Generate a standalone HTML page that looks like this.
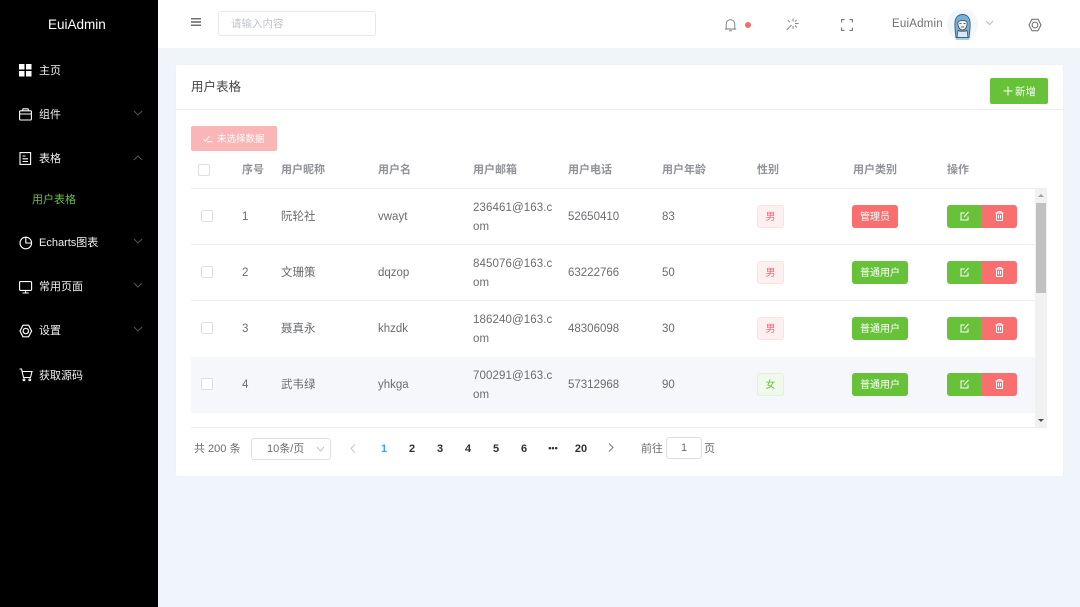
<!DOCTYPE html>
<html lang="zh">
<head>
<meta charset="utf-8">
<title>EuiAdmin</title>
<style>
*{box-sizing:border-box}
html,body{margin:0;padding:0}
body{width:1080px;height:607px;overflow:hidden;position:relative;background:#f0f4fb;font-family:"Liberation Sans","Noto Sans CJK SC",sans-serif;color:#606266}
#wrap{position:absolute;left:0;top:0;width:1080px;height:607px;overflow:hidden;background:#f0f4fb;filter:blur(.35px)}
.a{position:absolute;white-space:nowrap}
svg{display:block;position:absolute;fill:none;stroke:currentColor}
#side{left:0;top:0;width:158px;height:607px;background:#000;color:#fff}
.mi{position:absolute;left:39px;font-size:11px;line-height:14px;color:#f0f0f0}
#head{left:158px;top:0;width:922px;height:48px;background:#fff}
#card{left:175px;top:64px;width:889px;height:413px;background:#fff;border:1px solid #f0f2f7;border-radius:3px}
.th{position:absolute;top:163px;font-size:11px;line-height:14px;color:#909399;font-weight:700}
.line{position:absolute;left:191px;height:1px;background:#ebeef5}
.cb{position:absolute;width:12px;height:12px;border:1px solid #dcdfe6;border-radius:2px;background:#fff}
.td{position:absolute;font-size:11.5px;line-height:19px;color:#6a6c70;white-space:nowrap}
.tag{position:absolute;left:757px;width:27px;height:23px;border-radius:3px;font-size:10px;line-height:23px;text-align:center}
.m{background:#fef0f0;border:1px solid #fde2e2;color:#f56c6c}
.f{background:#f0f9eb;border:1px solid #e1f3d8;color:#67c23a}
.ty{position:absolute;left:852px;height:23px;border-radius:3px;font-size:10px;line-height:25px;text-align:center;color:#fff}
.ed{position:absolute;left:947px;width:35px;height:23px;background:#67c23a;border-radius:3px 0 0 3px;color:#fff}
.de{position:absolute;left:982px;width:35px;height:23px;background:#f96f6f;border-radius:0 3px 3px 0;color:#fff}
.pg{position:absolute;top:442px;width:20px;text-align:center;font-size:11px;line-height:14px;font-weight:700;color:#303133}
</style>
</head>
<body>
<div id="wrap">
<div class="a" id="side">
  <div class="a" style="left:48px;top:16px;font-size:13.5px;line-height:18px;color:#fff">EuiAdmin</div>

  <svg style="left:19px;top:64px" width="13" height="13" viewBox="0 0 13 13"><g fill="#fff" stroke="none"><rect width="5.500" height="5.500"/><rect x="7" width="5.500" height="5.500"/><rect y="7" width="5.500" height="5.500"/><rect x="7" y="7" width="5.500" height="5.500"/></g></svg>
  <div class="mi" style="top:64px">主页</div>

  <svg style="left:19px;top:108px" width="13" height="13" viewBox="0 0 13 13" stroke-width="1.100"><rect x=".6" y="2.800" width="11.800" height="9.200" rx="1"/><path d="M.6 6h11.800M3.500 2.800 4 .8h5l.5 2"/></svg>
  <div class="mi" style="top:108px">组件</div>
  <svg style="left:133px;top:110px;color:#555" width="10" height="6" viewBox="0 0 10 6"><path d="M1 1l4 4 4-4"/></svg>

  <svg style="left:19px;top:152px" width="13" height="13" viewBox="0 0 13 13" stroke-width="1.100"><rect x="1" y=".6" width="10.600" height="11.800"/><path d="M3.500 4h3M3.500 6.800h5.500M3.500 9.500h5.500"/></svg>
  <div class="mi" style="top:152px">表格</div>
  <svg style="left:133px;top:155px;color:#555" width="10" height="6" viewBox="0 0 10 6"><path d="M1 5l4-4 4 4"/></svg>

  <div class="mi" style="left:32px;top:193px;color:#67c23a">用户表格</div>

  <svg style="left:19px;top:236px" width="14" height="14" viewBox="0 0 14 14" stroke-width="1.100"><circle cx="6.800" cy="7" r="5.800"/><path d="M6.800 1.200V7h5.800"/></svg>
  <div class="mi" style="top:236px">Echarts图表</div>
  <svg style="left:133px;top:238px;color:#555" width="10" height="6" viewBox="0 0 10 6"><path d="M1 1l4 4 4-4"/></svg>

  <svg style="left:19px;top:281px" width="14" height="13" viewBox="0 0 14 13" stroke-width="1.100"><rect x=".6" y=".6" width="12" height="8.800" rx="1"/><path d="M6.600 9.500v2.200M3.500 12h6.200"/></svg>
  <div class="mi" style="top:280px">常用页面</div>
  <svg style="left:133px;top:282px;color:#555" width="10" height="6" viewBox="0 0 10 6"><path d="M1 1l4 4 4-4"/></svg>

  <svg style="left:19px;top:324px" width="14" height="14" viewBox="0 0 14 14" stroke-width="1.200"><path d="M4 1.200h5.600l3 5.800-3 5.800H4L1 7z"/><circle cx="6.800" cy="7" r="2.700"/></svg>
  <div class="mi" style="top:324px">设置</div>
  <svg style="left:133px;top:326px;color:#555" width="10" height="6" viewBox="0 0 10 6"><path d="M1 1l4 4 4-4"/></svg>

  <svg style="left:19px;top:368px" width="14" height="14" viewBox="0 0 14 14" stroke-width="1.100"><path d="M.5 1h2l2 8.500h7L13 3.500H3.300"/><circle cx="5" cy="11.800" r=".9"/><circle cx="10.800" cy="11.800" r=".9"/></svg>
  <div class="mi" style="top:369px">获取源码</div>
</div>

<div class="a" id="head"></div>
<svg style="left:191px;top:18px;color:#444" width="10" height="8" viewBox="0 0 10 8" stroke-width="1.200"><path d="M0 .8h10M0 4h10M0 7.200h10"/></svg>
<div class="a" style="left:218px;top:11px;width:158px;height:25px;border:1px solid #e4e7ed;border-radius:3px;background:#fff"></div>
<div class="a" style="left:231px;top:17px;font-size:10.500px;line-height:14px;color:#c0c4cc">请输入内容</div>

<svg style="left:724px;top:18px;color:#777" width="13" height="14" viewBox="0 0 13 14" stroke-width=".9"><path d="M.8 11h11.400M2.200 11V6a4.300 4.300 0 0 1 8.600 0v5M5 12.800h3"/></svg>
<div class="a" style="left:745px;top:22px;width:6px;height:6px;border-radius:50%;background:#f56c6c"></div>
<svg style="left:786px;top:18px;color:#888" width="13" height="13" viewBox="0 0 13 13" stroke-width="1"><path d="M7 .5v3M7 8v3M9 5.500h3.500M1.800 2.200l2 2M10.500 2l-1.600 1.600M9 7.500l2 2M5.500 7L.8 12"/></svg>
<svg style="left:841px;top:19px;color:#777" width="12" height="12" viewBox="0 0 12 12" stroke-width="1.100"><path d="M.6 3.500V.6h2.900M8.500.6h2.900v2.900M11.400 8.500v2.900H8.500M3.500 11.400H.6V8.500"/></svg>
<div class="a" style="left:892px;top:16px;font-size:11.500px;line-height:17px;letter-spacing:.2px;color:#707070">EuiAdmin</div>
<div class="a" style="left:947px;top:9px;width:31px;height:31px;border-radius:50%;background:#f2f7fd"></div>
<svg style="left:952px;top:12px" width="21" height="29" viewBox="0 0 21 29"><path d="M4 26c-1-8-1.500-12-1-16C3.500 5 6.500 2.500 10.500 2.500S17.500 5 18 10c.5 4 0 8-1 16z" fill="#6fb1e0" stroke="#4a5a6a" stroke-width=".9"/><path d="M6 10c2-2 7-2 9 0 .5 4-1.500 8-4.500 8S5.500 14 6 10z" fill="#f4f4f2" stroke="#444" stroke-width=".8"/><path d="M6 18.500c2 1 7 1 9 0l1 7H5z" fill="#dce9f4" stroke="#444" stroke-width=".7"/><path d="M7.500 11.500h2M11.500 11.500h2M9 15h3" stroke="#333" stroke-width=".8"/><path d="M4 26h13v2H4z" fill="#9fd0f0" stroke="none"/></svg>
<svg style="left:985px;top:20px;color:#bbb" width="9" height="6" viewBox="0 0 9 6"><path d="M1 1l3.500 3.500L8 1"/></svg>
<svg style="left:1028px;top:18px;color:#666" width="14" height="14" viewBox="0 0 14 14" stroke-width="1"><path d="M4 1.200h6l3 5.800-3 5.800H4L1 7z" stroke-linejoin="round"/><circle cx="7" cy="7" r="2.900"/></svg>

<div class="a" id="card"></div>
<div class="a" style="left:191px;top:79px;font-size:12.500px;line-height:17px;color:#444">用户表格</div>
<div class="a" style="left:175px;top:109px;width:889px;height:1px;background:#ebeef5"></div>
<div class="a" style="left:990px;top:78px;width:58px;height:26px;background:#67c23a;border-radius:2px;color:#fff;font-size:10.500px;line-height:29px;padding-left:25px">新增</div>
<svg style="left:1003px;top:86px;color:#fff" width="10" height="10" viewBox="0 0 10 10"><path d="M5 .5v9M.5 5h9"/></svg>

<div class="a" style="left:191px;top:126px;width:86px;height:25px;background:#fab6b6;border-radius:2px;color:#fff;font-size:9.500px;line-height:27px;padding-left:26px">未选择数据</div>
<svg style="left:203px;top:134px;color:#fff" width="10" height="9" viewBox="0 0 10 9"><path d="M.5 5l2 2 4-5M4 7.800h5.500"/></svg>

<div class="cb" style="left:198px;top:164px"></div>
<div class="th" style="left:242px">序号</div>
<div class="th" style="left:281px">用户昵称</div>
<div class="th" style="left:378px">用户名</div>
<div class="th" style="left:473px">用户邮箱</div>
<div class="th" style="left:568px">用户电话</div>
<div class="th" style="left:662px">用户年龄</div>
<div class="th" style="left:757px">性别</div>
<div class="th" style="left:853px">用户类别</div>
<div class="th" style="left:947px">操作</div>
<div class="line" style="top:188px;width:856px"></div>

<!-- row 1 -->
<div class="line" style="top:244px;width:844px"></div>
<div class="cb" style="left:201px;top:210px"></div>
<div class="td" style="left:242px;top:208px">1</div>
<div class="td" style="left:281px;top:208px">阮轮社</div>
<div class="td" style="left:378px;top:208px">vwayt</div>
<div class="td" style="left:473px;top:199px;letter-spacing:.1px">236461@163.c<br>om</div>
<div class="td" style="left:568px;top:208px">52650410</div>
<div class="td" style="left:662px;top:208px">83</div>
<div class="tag m" style="top:205px">男</div>
<div class="ty" style="top:205px;width:46px;background:#f96f6f">管理员</div>
<div class="ed" style="top:205px"><svg style="left:13px;top:6px" width="10" height="10" viewBox="0 0 10 10"><path d="M8 5.500V9H1V2h3.500M4 6l4.500-5"/></svg></div>
<div class="de" style="top:205px"><svg style="left:13px;top:6px" width="9" height="10" viewBox="0 0 9 10"><path d="M.5 2h8M3 2V.6h3V2M1.500 2v7.500h6V2M3.500 4v3.500M5.500 4v3.500"/></svg></div>

<!-- row 2 -->
<div class="line" style="top:300px;width:844px"></div>
<div class="cb" style="left:201px;top:266px"></div>
<div class="td" style="left:242px;top:264px">2</div>
<div class="td" style="left:281px;top:264px">文珊策</div>
<div class="td" style="left:378px;top:264px">dqzop</div>
<div class="td" style="left:473px;top:255px;letter-spacing:.1px">845076@163.c<br>om</div>
<div class="td" style="left:568px;top:264px">63222766</div>
<div class="td" style="left:662px;top:264px">50</div>
<div class="tag m" style="top:261px">男</div>
<div class="ty" style="top:261px;width:56px;background:#67c23a">普通用户</div>
<div class="ed" style="top:261px"><svg style="left:13px;top:6px" width="10" height="10" viewBox="0 0 10 10"><path d="M8 5.500V9H1V2h3.500M4 6l4.500-5"/></svg></div>
<div class="de" style="top:261px"><svg style="left:13px;top:6px" width="9" height="10" viewBox="0 0 9 10"><path d="M.5 2h8M3 2V.6h3V2M1.500 2v7.500h6V2M3.500 4v3.500M5.500 4v3.500"/></svg></div>

<!-- row 3 -->
<div class="cb" style="left:201px;top:322px"></div>
<div class="td" style="left:242px;top:320px">3</div>
<div class="td" style="left:281px;top:320px">聂真永</div>
<div class="td" style="left:378px;top:320px">khzdk</div>
<div class="td" style="left:473px;top:311px;letter-spacing:.1px">186240@163.c<br>om</div>
<div class="td" style="left:568px;top:320px">48306098</div>
<div class="td" style="left:662px;top:320px">30</div>
<div class="tag m" style="top:317px">男</div>
<div class="ty" style="top:317px;width:56px;background:#67c23a">普通用户</div>
<div class="ed" style="top:317px"><svg style="left:13px;top:6px" width="10" height="10" viewBox="0 0 10 10"><path d="M8 5.500V9H1V2h3.500M4 6l4.500-5"/></svg></div>
<div class="de" style="top:317px"><svg style="left:13px;top:6px" width="9" height="10" viewBox="0 0 9 10"><path d="M.5 2h8M3 2V.6h3V2M1.500 2v7.500h6V2M3.500 4v3.500M5.500 4v3.500"/></svg></div>

<!-- row 4 -->
<div class="a" style="left:191px;top:357px;width:844px;height:56px;background:#f5f7fa"></div>
<div class="cb" style="left:201px;top:378px"></div>
<div class="td" style="left:242px;top:376px">4</div>
<div class="td" style="left:281px;top:376px">武韦绿</div>
<div class="td" style="left:378px;top:376px">yhkga</div>
<div class="td" style="left:473px;top:367px;letter-spacing:.1px">700291@163.c<br>om</div>
<div class="td" style="left:568px;top:376px">57312968</div>
<div class="td" style="left:662px;top:376px">90</div>
<div class="tag f" style="top:373px">女</div>
<div class="ty" style="top:373px;width:56px;background:#67c23a">普通用户</div>
<div class="ed" style="top:373px"><svg style="left:13px;top:6px" width="10" height="10" viewBox="0 0 10 10"><path d="M8 5.500V9H1V2h3.500M4 6l4.500-5"/></svg></div>
<div class="de" style="top:373px"><svg style="left:13px;top:6px" width="9" height="10" viewBox="0 0 9 10"><path d="M.5 2h8M3 2V.6h3V2M1.500 2v7.500h6V2M3.500 4v3.500M5.500 4v3.500"/></svg></div>

<!-- scrollbar -->
<div class="a" style="left:1035px;top:189px;width:12px;height:238px;background:#f1f1f1"></div>
<div class="a" style="left:1036px;top:203px;width:10px;height:90px;background:#c1c1c1"></div>
<div class="a" style="left:1038px;top:194px;width:0;height:0;border-left:3px solid transparent;border-right:3px solid transparent;border-bottom:3px solid #a0a0a0"></div>
<div class="a" style="left:1038px;top:419px;width:0;height:0;border-left:3px solid transparent;border-right:3px solid transparent;border-top:3px solid #505050"></div>
<div class="line" style="top:427px;width:856px"></div>

<!-- pagination -->
<div class="a" style="left:194px;top:442px;font-size:11px;line-height:14px;color:#6a6c70">共 200 条</div>
<div class="a" style="left:251px;top:438px;width:80px;height:22px;border:1px solid #dcdfe6;border-radius:3px;background:#fff"></div>
<div class="a" style="left:267px;top:442px;font-size:11px;line-height:14px;color:#6a6c70">10条/页</div>
<svg style="left:316px;top:446px;color:#c0c4cc" width="9" height="6" viewBox="0 0 9 6"><path d="M1 1l3.500 4L8 1"/></svg>
<svg style="left:350px;top:444px;color:#c0c4cc" width="6" height="9" viewBox="0 0 6 9"><path d="M5 .5L1 4.500l4 4"/></svg>
<div class="pg" style="left:374px;color:#409eff">1</div>
<div class="pg" style="left:402px">2</div>
<div class="pg" style="left:430px">3</div>
<div class="pg" style="left:458px">4</div>
<div class="pg" style="left:486px">5</div>
<div class="pg" style="left:514px">6</div>
<div class="pg" style="left:543px;top:441px;font-size:9px">•••</div>
<div class="pg" style="left:571px">20</div>
<svg style="left:608px;top:443px;color:#777" width="6" height="9" viewBox="0 0 6 9"><path d="M1 .5l4 4-4 4"/></svg>
<div class="a" style="left:641px;top:442px;font-size:11px;line-height:14px;color:#6a6c70">前往</div>
<div class="a" style="left:666px;top:437px;width:36px;height:22px;border:1px solid #dcdfe6;border-radius:3px;background:#fff;text-align:center;font-size:11px;line-height:21px;color:#6a6c70">1</div>
<div class="a" style="left:704px;top:442px;font-size:11px;line-height:14px;color:#6a6c70">页</div>
</div>
</body>
</html>
